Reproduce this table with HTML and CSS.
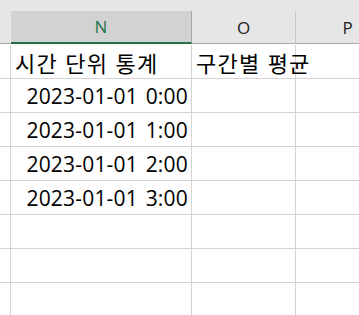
FILE: index.html
```html
<!DOCTYPE html>
<html lang="ko">
<head>
<meta charset="UTF-8" />
<title>시트</title>
<link rel="stylesheet" href="styles.css">
</head>
<body>
<div class="strip"></div>
<div class="sheet">
  <div class="hd corner"></div>
  <div class="hd col selected">N</div>
  <div class="hd col">O</div>
  <div class="hd col">P</div>

  <div class="cell edge"></div>
  <div class="cell text">시간 단위 통계</div>
  <div class="cell text">구간별 평균</div>
  <div class="cell"></div>

  <div class="cell edge"></div>
  <div class="cell num">2023-01-01 0:00</div>
  <div class="cell"></div>
  <div class="cell"></div>

  <div class="cell edge"></div>
  <div class="cell num">2023-01-01 1:00</div>
  <div class="cell"></div>
  <div class="cell"></div>

  <div class="cell edge"></div>
  <div class="cell num">2023-01-01 2:00</div>
  <div class="cell"></div>
  <div class="cell"></div>

  <div class="cell edge"></div>
  <div class="cell num">2023-01-01 3:00</div>
  <div class="cell"></div>
  <div class="cell"></div>

  <div class="cell edge"></div>
  <div class="cell"></div>
  <div class="cell"></div>
  <div class="cell"></div>

  <div class="cell edge"></div>
  <div class="cell"></div>
  <div class="cell"></div>
  <div class="cell"></div>

  <div class="cell edge"></div>
  <div class="cell"></div>
  <div class="cell"></div>
  <div class="cell"></div>

  <div class="cell edge"></div>
  <div class="cell"></div>
  <div class="cell"></div>
  <div class="cell"></div>
</div>
</body>
</html>
```

FILE: styles.css
```css
* { box-sizing: border-box; }
html, body {
  margin: 0; padding: 0;
  height: 100%;
  background: #fff;
  overflow: hidden;
  font-family: 'Noto Sans', 'Noto Sans CJK KR', sans-serif;
  color: #000;
}
/* grey band above the column headers */
.strip {
  height: 11px;
  background: #e6e6e6;
}
.sheet {
  display: grid;
  grid-template-columns: 11px 181px 104px 104px;
  grid-auto-rows: 34px;
}
/* Column headers */
.hd {
  height: 33px;
  background: #e6e6e6;
  border-bottom: 1px solid #ababab;
  display: flex; align-items: center; justify-content: center;
  font-family: 'Open Sans', sans-serif;
  font-size: 17px;
  color: #222;
}
.hd.col { border-right: 1px solid #c6c6c6; }
.hd.selected {
  background: #d2d2d2;
  color: #217346;
  border-bottom: 2px solid #217346;
  border-right-color: #a8a8a8;
}
/* Grid cells */
.cell {
  border-right: 1px solid #d4d4d4;
  border-bottom: 1px solid #d4d4d4;
  font-size: 20px;
  white-space: nowrap;
  display: flex; align-items: center;
}
.text {
  font-family: 'Noto Sans CJK KR', sans-serif;
  font-size: 22px;
  letter-spacing: 1.2px;
  padding-left: 4px;
}
.num {
  justify-content: flex-end;
  padding-right: 3px;
  font-family: 'Open Sans', sans-serif;
  font-size: 21px;
  letter-spacing: 0.2px;
  word-spacing: 2px;
}
```
